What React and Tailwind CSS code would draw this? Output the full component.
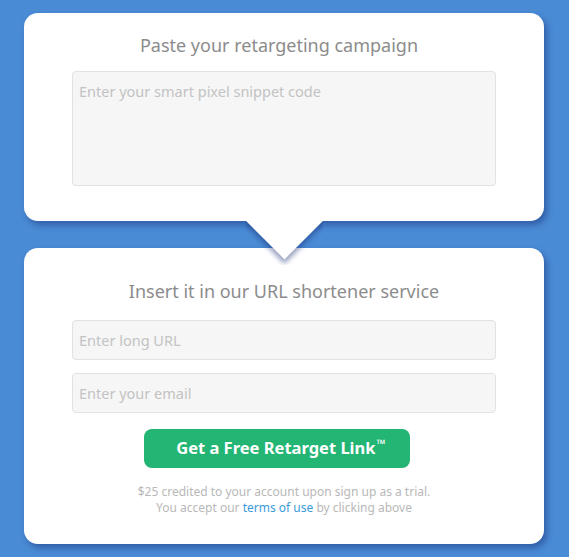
import React from "react";

const font = { fontFamily: '"Noto Sans", "Open Sans", sans-serif' };

const App = () => {
  return (
    <div
      className="w-full min-h-[557px] bg-[#4a8bd5] pt-[13px] pb-[13px] pl-[24px] text-[#8d8d8d]"
      style={font}
    >
      {/* card one */}
      <div className="relative z-10 w-[520px] bg-white rounded-[14px] shadow-[3px_4px_6px_rgba(20,40,110,0.45)] px-[48px] pt-[19px] pb-[35px]">
        <p className="text-center text-[18px] leading-[26px] text-[#8c8c8c] pr-[10px]">
          Paste your retargeting campaign
        </p>
        <textarea
          className="mt-[13px] block w-full h-[115px] resize-none bg-[#f6f6f6] border border-[#e2e2e2] rounded-[4px] px-[6px] py-[8px] text-[14.5px] leading-[22px] outline-none placeholder:text-[#c3c3c3]"
          placeholder="Enter your smart pixel snippet code"
        />
        {/* arrow under the card */}
        <div className="absolute top-full left-[221px] w-[78px] h-[44px] overflow-hidden">
          <div className="absolute left-[11.5px] top-[-28px] w-[55px] h-[55px] rotate-45 bg-white shadow-[3px_3px_5px_rgba(20,40,110,0.45)]" />
        </div>
      </div>

      {/* card two */}
      <div className="mt-[27px] w-[520px] bg-white rounded-[14px] shadow-[3px_4px_6px_rgba(20,40,110,0.45)] px-[48px] pt-[30px] pb-[28px]">
        <p className="text-center text-[18px] leading-[26px] text-[#8c8c8c]">
          Insert it in our URL shortener service
        </p>
        <div className="mt-[16px] flex flex-col gap-[13px]">
          <input
            className="w-full h-[40px] bg-[#f6f6f6] border border-[#e2e2e2] rounded-[4px] px-[6px] text-[14.5px] outline-none placeholder:text-[#c3c3c3]"
            placeholder="Enter long URL"
          />
          <input
            className="w-full h-[40px] bg-[#f6f6f6] border border-[#e2e2e2] rounded-[4px] px-[6px] text-[14.5px] outline-none placeholder:text-[#c3c3c3]"
            placeholder="Enter your email"
          />
        </div>
        <button className="mt-[16px] ml-[72px] w-[266px] h-[39px] rounded-[8px] bg-[#22b574] text-white text-[16.5px] font-bold flex items-center justify-center pl-[8px]">
          Get a Free Retarget Link
          <span className="text-[12px] ml-[1px] -mt-[10px]">™</span>
        </button>
        <div className="mt-[16px] text-center text-[12px] leading-[16px] text-[#b8b8b8]">
          <p>$25 credited to your account upon sign up as a trial.</p>
          <p>
            You accept our <a className="text-[#3a9bdc]">terms of use</a> by clicking above
          </p>
        </div>
      </div>
    </div>
  );
};

export default App;
